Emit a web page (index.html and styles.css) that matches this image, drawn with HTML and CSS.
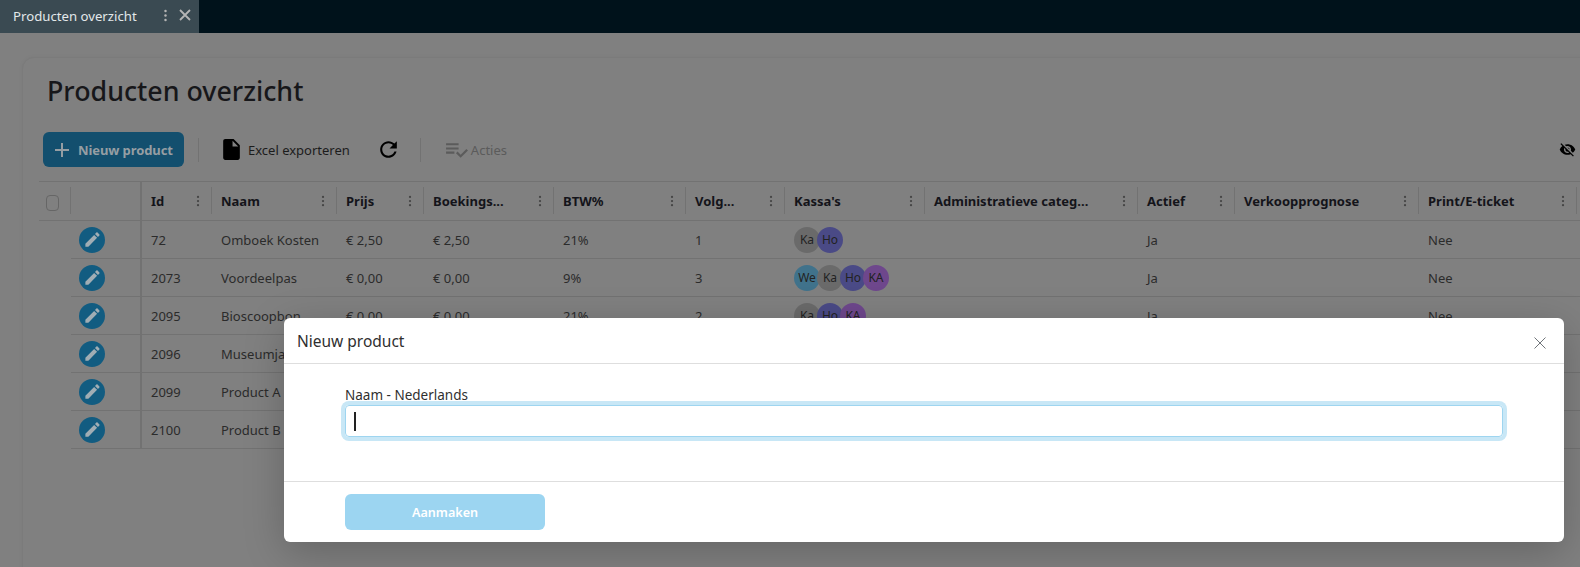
FILE: index.html
```html
<!DOCTYPE html>
<html lang="en">
<head>
    <meta charset="UTF-8">
    <meta name="viewport" content="width=device-width, initial-scale=1.0">
    <title>Producten overzicht</title>
    <link rel="stylesheet" href="styles.css">
</head>
<body>
    <svg class="icon-defs" aria-hidden="true">
        <symbol id="i-kebab" viewBox="0 0 4 16"><circle cx="2" cy="2.5" r="1.5"/><circle cx="2" cy="8" r="1.5"/><circle cx="2" cy="13.5" r="1.5"/></symbol>
        <symbol id="i-edit" viewBox="0 0 24 24"><path d="M3 17.25V21h3.75L17.81 9.94l-3.75-3.75L3 17.25zM20.71 7.04c.39-.39.39-1.02 0-1.41l-2.34-2.34c-.39-.39-1.02-.39-1.41 0l-1.83 1.83 3.75 3.75 1.83-1.83z"/></symbol>
    </svg>

    <div class="tabbar">
        <div class="tab">
            <span class="tab-title">Producten overzicht</span>
            <svg class="tab-kebab"><use href="#i-kebab"/></svg>
            <svg class="tab-close" viewBox="0 0 12 12"><path d="M1 1l10 10M11 1L1 11"/></svg>
        </div>
    </div>

    <main class="main">
        <section class="card">
            <h1 class="page-title">Producten overzicht</h1>

            <div class="toolbar">
                <button class="btn-new">
                    <svg class="plus" viewBox="0 0 16 16"><path d="M8 1v14M1 8h14"/></svg>
                    Nieuw product
                </button>
                <span class="tool-sep"></span>
                <span class="tool tool-excel">
                    <svg viewBox="0 0 24 24"><path d="M6 2c-1.1 0-1.99.9-1.99 2L4 20c0 1.1.89 2 1.99 2H18c1.1 0 2-.9 2-2V8l-6-6H6zm7 7V3.5L18.5 9H13z"/></svg>
                    Excel exporteren
                </span>
                <svg class="tool-refresh" viewBox="0 0 24 24"><path d="M17.65 6.35C16.2 4.9 14.21 4 12 4c-4.42 0-7.99 3.58-7.99 8s3.57 8 7.99 8c3.73 0 6.84-2.55 7.73-6h-2.08c-.82 2.33-3.04 4-5.65 4-3.31 0-6-2.69-6-6s2.69-6 6-6c1.66 0 3.14.69 4.22 1.78L13 11h7V4l-2.35 2.35z"/></svg>
                <span class="tool-sep tool-sep-2"></span>
                <span class="tool tool-acties">
                    <svg viewBox="0 0 24 24"><path d="M14 10H2v2h12v-2zm0-4H2v2h12V6zM2 16h8v-2H2v2zm19.5-4.5L23 13l-6.99 7-4.51-4.5L13 14l3.01 3 5.49-5.5z"/></svg>
                    Acties
                </span>
                <svg class="tool-eye" viewBox="0 0 24 24"><path d="M12 7c2.76 0 5 2.24 5 5 0 .65-.13 1.26-.36 1.83l2.92 2.92c1.51-1.26 2.7-2.89 3.43-4.75-1.73-4.39-6-7.5-11-7.5-1.4 0-2.74.25-3.98.7l2.16 2.16C10.74 7.13 11.35 7 12 7zM2 4.27l2.28 2.28.46.46C3.08 8.3 1.78 10.02 1 12c1.73 4.39 6 7.5 11 7.5 1.55 0 3.03-.3 4.38-.84l.42.42L19.73 22 21 20.73 3.27 3 2 4.27zM7.53 9.8l1.55 1.55c-.05.21-.08.43-.08.65 0 1.66 1.34 3 3 3 .22 0 .44-.03.65-.08l1.55 1.55c-.67.33-1.41.53-2.2.53-2.76 0-5-2.24-5-5 0-.79.2-1.53.53-2.2zm4.31-.78l3.15 3.15.02-.16c0-1.66-1.34-3-3-3l-.17.01z"/></svg>
            </div>

            <div class="grid">
                <div class="row head">
                    <div class="th th-check"><span class="checkbox"></span></div>
                    <div class="th th-edit"></div>
                    <div class="th"><span>Id</span><svg class="kebab"><use href="#i-kebab"/></svg></div>
                    <div class="th"><span>Naam</span><svg class="kebab"><use href="#i-kebab"/></svg></div>
                    <div class="th"><span>Prijs</span><svg class="kebab"><use href="#i-kebab"/></svg></div>
                    <div class="th"><span>Boekings...</span><svg class="kebab"><use href="#i-kebab"/></svg></div>
                    <div class="th"><span>BTW%</span><svg class="kebab"><use href="#i-kebab"/></svg></div>
                    <div class="th"><span>Volg...</span><svg class="kebab"><use href="#i-kebab"/></svg></div>
                    <div class="th"><span>Kassa's</span><svg class="kebab"><use href="#i-kebab"/></svg></div>
                    <div class="th"><span>Administratieve categ...</span><svg class="kebab"><use href="#i-kebab"/></svg></div>
                    <div class="th"><span>Actief</span><svg class="kebab"><use href="#i-kebab"/></svg></div>
                    <div class="th"><span>Verkoopprognose</span><svg class="kebab"><use href="#i-kebab"/></svg></div>
                    <div class="th"><span>Print/E-ticket</span><svg class="kebab"><use href="#i-kebab"/></svg></div>
                    <div class="th th-last"></div>
                </div>

                <div class="row">
                    <div class="td-blank"></div>
                    <div class="td td-edit"><span class="edit-btn"><svg><use href="#i-edit"/></svg></span></div>
                    <div class="td">72</div>
                    <div class="td">Omboek Kosten</div>
                    <div class="td">€ 2,50</div>
                    <div class="td">€ 2,50</div>
                    <div class="td">21%</div>
                    <div class="td">1</div>
                    <div class="td"><span class="badge b-ka">Ka</span><span class="badge b-ho">Ho</span></div>
                    <div class="td"></div>
                    <div class="td">Ja</div>
                    <div class="td"></div>
                    <div class="td">Nee</div>
                    <div class="td"></div>
                </div>

                <div class="row">
                    <div class="td-blank"></div>
                    <div class="td td-edit"><span class="edit-btn"><svg><use href="#i-edit"/></svg></span></div>
                    <div class="td">2073</div>
                    <div class="td">Voordeelpas</div>
                    <div class="td">€ 0,00</div>
                    <div class="td">€ 0,00</div>
                    <div class="td">9%</div>
                    <div class="td">3</div>
                    <div class="td"><span class="badge b-we">We</span><span class="badge b-ka">Ka</span><span class="badge b-ho">Ho</span><span class="badge b-kb">KA</span></div>
                    <div class="td"></div>
                    <div class="td">Ja</div>
                    <div class="td"></div>
                    <div class="td">Nee</div>
                    <div class="td"></div>
                </div>

                <div class="row">
                    <div class="td-blank"></div>
                    <div class="td td-edit"><span class="edit-btn"><svg><use href="#i-edit"/></svg></span></div>
                    <div class="td">2095</div>
                    <div class="td">Bioscoopbon</div>
                    <div class="td">€ 0,00</div>
                    <div class="td">€ 0,00</div>
                    <div class="td">21%</div>
                    <div class="td">2</div>
                    <div class="td"><span class="badge b-ka">Ka</span><span class="badge b-ho">Ho</span><span class="badge b-kb">KA</span></div>
                    <div class="td"></div>
                    <div class="td">Ja</div>
                    <div class="td"></div>
                    <div class="td">Nee</div>
                    <div class="td"></div>
                </div>

                <div class="row">
                    <div class="td-blank"></div>
                    <div class="td td-edit"><span class="edit-btn"><svg><use href="#i-edit"/></svg></span></div>
                    <div class="td">2096</div>
                    <div class="td">Museumjaar</div>
                    <div class="td td-rest"></div>
                </div>

                <div class="row">
                    <div class="td-blank"></div>
                    <div class="td td-edit"><span class="edit-btn"><svg><use href="#i-edit"/></svg></span></div>
                    <div class="td">2099</div>
                    <div class="td">Product A</div>
                    <div class="td td-rest"></div>
                </div>

                <div class="row">
                    <div class="td-blank"></div>
                    <div class="td td-edit"><span class="edit-btn"><svg><use href="#i-edit"/></svg></span></div>
                    <div class="td">2100</div>
                    <div class="td">Product B</div>
                    <div class="td td-rest"></div>
                </div>
            </div>
        </section>
    </main>

    <div class="modal">
        <div class="modal-header">
            <span class="modal-title">Nieuw product</span>
            <svg class="modal-close" viewBox="0 0 12 12"><path d="M.5.5l11 11M11.5.5l-11 11"/></svg>
        </div>
        <div class="modal-body">
            <label class="field-label">Naam - Nederlands</label>
            <div class="field-input"><span class="caret"></span></div>
        </div>
        <div class="modal-footer">
            <button class="btn-create">Aanmaken</button>
        </div>
    </div>
</body>
</html>
```

FILE: styles.css
```css
* {
    box-sizing: border-box;
}
html, body {
    height: 100%;
}
body {
    margin: 0;
    overflow: hidden;
    position: relative;
    background: #808080;
    font-family: 'Noto Sans', 'Open Sans', sans-serif;
    font-size: 13px;
    color: #2b2b2b;
}
.icon-defs {
    display: none;
}

/* tab bar */
.tabbar {
    height: 33px;
    background: #00121b;
}
.tab {
    width: 199px;
    height: 33px;
    display: flex;
    align-items: center;
    padding-left: 13px;
    background: #3a4a52;
    color: #e3e8ea;
    font-size: 13.2px;
}
.tab-title {
    width: 150px;
    margin-bottom: 2px;
}
.tab-kebab {
    width: 5px;
    height: 13px;
    margin-bottom: 3px;
    fill: #b5b5b5;
}
.tab-close {
    width: 12px;
    height: 12px;
    margin: 0 0 3px 11px;
    stroke: #b5b5b5;
    stroke-width: 1.8;
    fill: none;
}

/* card */
.main {
    height: 534px;
    padding: 24px 0 0 22px;
    overflow: hidden;
}
.card {
    width: 1580px;
    height: 540px;
    padding: 15px 16px;
    background: #808080;
    border: 1px solid #7b7b7b;
    border-radius: 12px;
    box-shadow: 0 0 4px rgba(0, 0, 0, 0.04);
}
.page-title {
    margin: 0 0 23px 8px;
    font-size: 26.8px;
    font-weight: 500;
    line-height: 36px;
    color: #17171a;
}

/* toolbar */
.toolbar {
    display: flex;
    align-items: center;
    height: 35px;
    margin: 0 9px 14px 4px;
}
.btn-new {
    width: 141px;
    height: 35px;
    display: flex;
    align-items: center;
    padding: 0 0 0 11px;
    border: none;
    border-radius: 6px;
    background: #134f6e;
    color: #969ea3;
    font-family: inherit;
    font-size: 13px;
    font-weight: 700;
    letter-spacing: -0.1px;
}
.plus {
    width: 16px;
    height: 16px;
    margin-right: 8px;
    stroke: #969ea3;
    stroke-width: 2;
    fill: none;
}
.tool-sep {
    width: 1px;
    height: 24px;
    margin: 0 20px 0 14px;
    background: #727272;
}
.tool {
    display: flex;
    align-items: center;
}
.tool-excel {
    color: #1c1c1c;
}
.tool-excel svg {
    width: 25px;
    height: 25px;
    margin-right: 4px;
    fill: #000;
}
.tool-refresh {
    width: 25px;
    height: 25px;
    margin-left: 26px;
    fill: #000;
}
.tool-sep-2 {
    margin: 0 23px 0 19px;
}
.tool-acties {
    color: #5b5b5b;
}
.tool-acties svg {
    width: 25px;
    height: 25px;
    margin-right: 2px;
    fill: #5b5b5b;
}
.tool-eye {
    width: 17px;
    height: 17px;
    margin-left: auto;
    fill: #000;
}

/* table */
.grid {
    border-top: 1px solid #727272;
}
.row {
    display: grid;
    grid-template-columns: 32px 71px 70px 125px 87px 130px 132px 99px 140px 213px 97px 184px 158px 1fr;
    height: 38px;
}
.head {
    height: 39px;
    border-bottom: 1px solid #727272;
}
.th {
    position: relative;
    display: flex;
    align-items: center;
    justify-content: space-between;
    padding: 0 12px 0 9px;
    font-weight: 700;
    color: #14141a;
}
.th::after {
    content: "";
    position: absolute;
    right: 0;
    top: 5px;
    bottom: 6px;
    width: 1px;
    background: #727272;
}
.th-last::after {
    display: none;
}
.th-edit::after {
    top: 0;
    bottom: 0;
    width: 2px;
}
.kebab {
    width: 4px;
    height: 12px;
    fill: #454545;
}
.checkbox {
    width: 16px;
    height: 16px;
    margin: 3px 0 0 -2px;
    border: 1px solid #666;
    border-radius: 4px;
}
.td {
    display: flex;
    align-items: center;
    padding: 0 9px;
    border-bottom: 1px solid #727272;
    color: #2b2b2b;
}
.td-edit {
    padding-left: 8px;
    border-right: 2px solid #727272;
}
.td-rest {
    grid-column: 5 / -1;
}
.edit-btn {
    width: 26px;
    height: 26px;
    display: flex;
    align-items: center;
    justify-content: center;
    border-radius: 50%;
    background: #125c81;
}
.edit-btn svg {
    width: 19px;
    height: 19px;
    fill: #a0adb4;
}
.badge {
    width: 26px;
    height: 26px;
    display: flex;
    flex-shrink: 0;
    align-items: center;
    justify-content: center;
    margin-right: -3px;
    border-radius: 50%;
    font-size: 12px;
    color: #222;
}
.b-ka { background: #6a6a6a; }
.b-ho { background: #4a4a86; }
.b-we { background: #40728b; }
.b-kb { background: #6e478c; }

/* modal, over the page */
.modal {
    position: absolute;
    left: 284px;
    top: 318px;
    width: 1280px;
    height: 224px;
    background: #fff;
    border-radius: 6px;
    box-shadow: 0 10px 40px rgba(0, 0, 0, 0.22);
}
.modal-header {
    height: 46px;
    display: flex;
    align-items: center;
    justify-content: space-between;
    padding: 0 18px 0 13px;
    border-bottom: 1px solid #dedede;
}
.modal-title {
    margin-top: 1px;
    font-size: 15.5px;
    color: #2f2f2f;
}
.modal-close {
    width: 12px;
    height: 12px;
    margin-top: 4px;
    stroke: #70757a;
    stroke-width: 1;
    fill: none;
}
.modal-body {
    height: 118px;
    padding: 22px 0 0 61px;
    border-bottom: 1px solid #dedede;
}
.field-label {
    display: block;
    height: 19px;
    font-size: 13.5px;
    line-height: 19px;
    color: #2f2f2f;
}
.field-input {
    width: 1158px;
    height: 32px;
    display: flex;
    align-items: center;
    padding-left: 8px;
    border: 1px solid #9ed5f0;
    border-radius: 4px;
    box-shadow: 0 0 0 4px #c8e7f6;
}
.caret {
    width: 2px;
    height: 19px;
    background: #222;
}
.modal-footer {
    padding: 12px 0 0 61px;
}
.btn-create {
    width: 200px;
    height: 36px;
    border: none;
    border-radius: 6px;
    background: #9cd5f1;
    color: #fff;
    font-family: inherit;
    font-size: 12.6px;
    font-weight: 600;
}
```
